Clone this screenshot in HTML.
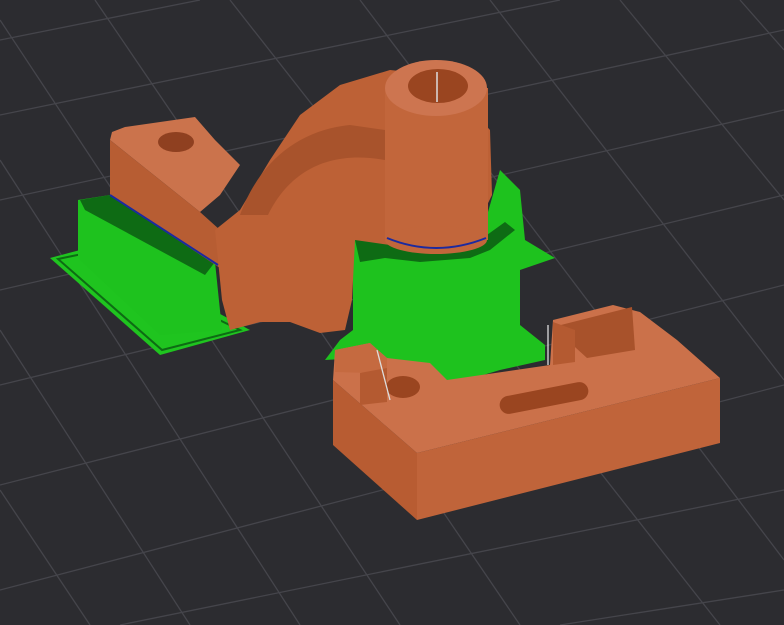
<!DOCTYPE html>
<html><head><meta charset="utf-8"><style>
html,body{margin:0;padding:0;background:#2c2c30;}
svg{display:block}
</style></head><body>
<svg width="784" height="625" viewBox="0 0 784 625" xmlns="http://www.w3.org/2000/svg">
<rect width="784" height="625" fill="#2c2c30"/>
<g stroke="#45454b" stroke-width="1.3" fill="none">
<path d="M0 40 L200 0"/><path d="M0 115 L560 0"/><path d="M0 200 L784 30"/><path d="M0 290 L784 110"/>
<path d="M0 385 L784 195"/><path d="M0 485 L784 285"/><path d="M0 590 L784 385"/><path d="M120 625 L784 490"/><path d="M560 625 L784 590"/>
<path d="M95 0 L520 625"/><path d="M230 0 L720 625"/><path d="M360 0 L784 560"/><path d="M490 0 L784 380"/>
<path d="M620 0 L784 200"/><path d="M740 0 L784 50"/><path d="M0 20 L400 625"/><path d="M0 160 L300 625"/>
<path d="M0 330 L190 625"/><path d="M0 490 L90 625"/>
</g>
<!-- left green support -->
<polygon points="50,258 80,250 110,255 250,330 160,355" fill="#1fc41f"/>
<polygon points="58,259 82,254 240,330 162,350" fill="none" stroke="#0e6b14" stroke-width="2"/>
<polygon points="78,200 110,195 215,262 222,330 160,335 78,258" fill="#1ec21e"/>
<polygon points="80,200 110,195 215,262 205,275 85,210" fill="#0e6b14"/>
<!-- left block -->
<polygon points="110,140 112,132 125,127 195,117 215,140 240,165 220,195 200,212" fill="#cb734c"/>
<polygon points="110,140 200,212 220,230 220,268 110,195" fill="#b75d33"/>
<line x1="110" y1="195" x2="218" y2="265" stroke="#1b2aa0" stroke-width="2"/>
<ellipse cx="176" cy="142" rx="18" ry="10" fill="#8f4020"/>
<!-- right green tower -->
<polygon points="353,240 385,228 420,245 480,240 500,170 520,190 525,240 555,258 520,270 520,325 545,345 545,360 500,370 450,385 415,380 360,358 325,360 340,340 353,330" fill="#1ec21e"/>
<polygon points="355,240 385,228 420,248 480,240 505,222 515,230 490,250 470,258 420,262 385,258 360,262" fill="#0e6b14"/>
<!-- arch -->
<polygon points="215,230 240,210 270,160 300,115 340,85 390,70 440,75 490,130 492,195 470,240 430,248 390,245 355,240 352,300 345,330 320,333 290,322 260,322 230,330 222,300" fill="#bd6136"/>
<path d="M240,215 C260,160 300,130 350,125 L385,130 L385,160 C330,150 290,170 268,215 Z" fill="#a8532c"/>
<!-- cylinder -->
<rect x="385" y="88" width="103" height="152" fill="#c2663b"/>
<ellipse cx="436" cy="240" rx="51" ry="14" fill="#c2663b"/>
<path d="M387,238 Q436,258 486,238" stroke="#1b2aa0" stroke-width="2" fill="none"/>
<ellipse cx="436" cy="88" rx="51" ry="28" fill="#cd7550"/>
<ellipse cx="438" cy="86" rx="30" ry="17" fill="#9a4520"/>
<line x1="437" y1="72" x2="437" y2="102" stroke="#ddd" stroke-width="1.5"/>
<!-- right box -->
<polygon points="333,380 417,453 417,520 333,445" fill="#b85c32"/>
<polygon points="417,453 720,378 720,443 417,520" fill="#c0643a"/>
<polygon points="333,380 335,350 370,343 387,358 430,363 447,380 550,365 553,320 613,305 640,312 677,340 720,378 417,453" fill="#cb714a"/>
<polygon points="553,327 632,307 635,350 587,358" fill="#a8522b"/>
<polygon points="553,322 553,365 575,362 575,330" fill="#b45a31"/>
<polygon points="335,350 370,343 387,358 387,368 370,373 335,372" fill="#c56a40"/>
<polygon points="360,373 387,368 387,402 360,405" fill="#b45a31"/>
<ellipse cx="403" cy="387" rx="17" ry="11" fill="#9a4520"/>
<rect x="499" y="389" width="90" height="18" rx="9" transform="rotate(-11 544 398)" fill="#9a4520"/>
<line x1="377" y1="350" x2="390" y2="400" stroke="#ddd" stroke-width="1.3"/>
<line x1="548" y1="325" x2="548" y2="365" stroke="#ddd" stroke-width="1.3"/>
</svg>
</body></html>
